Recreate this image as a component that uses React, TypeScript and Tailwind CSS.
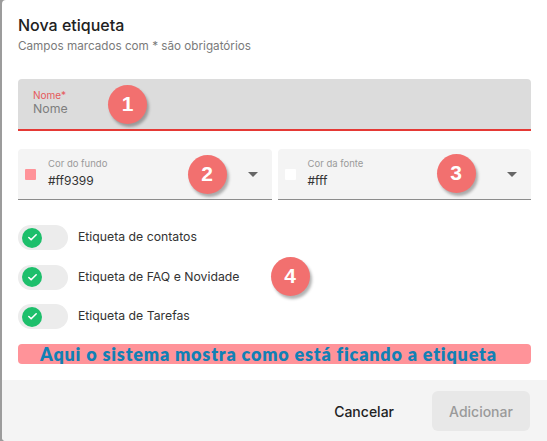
import { Check } from "lucide-react";

const font = { fontFamily: "Inter, 'Noto Sans', sans-serif" };

function Badge({ n, x, y }: { n: number; x: number; y: number }) {
  return (
    <div
      className="absolute w-[39px] h-[39px] rounded-full bg-[#f2706f] text-white flex items-center justify-center text-[21px] font-bold shadow-[2px_3px_3px_rgba(0,0,0,0.3)] font-['Liberation_Sans',Arial,sans-serif]"
      style={{ left: x - 19.5, top: y - 19.5 }}
    >
      {n}
    </div>
  );
}

function Caret() {
  return (
    <svg width="10" height="5" viewBox="0 0 10 5" className="shrink-0">
      <path d="M0 0h10L5 5z" fill="#666" />
    </svg>
  );
}

function ColorSelect({ label, value, swatch }: { label: string; value: string; swatch: string }) {
  return (
    <div className="flex-1 h-[51px] bg-[#f4f4f4] rounded-t-[4px] border-b border-[#8c8c8c] flex items-center pl-[7px] pr-[14px]">
      <div className="w-[11px] h-[11px] rounded-[1px]" style={{ background: swatch }} />
      <div className="flex flex-col ml-[12px] flex-1 -mt-[1px]">
        <span className="text-[9.5px] leading-[12px] text-[#9a9a9a]">{label}</span>
        <span className="text-[12px] leading-[16px] text-[#333] mt-[3px]">{value}</span>
      </div>
      <Caret />
    </div>
  );
}

function Toggle({ label }: { label: string }) {
  return (
    <div className="flex items-center h-[25px]">
      <div className="w-[50px] h-[25px] rounded-full bg-[#ececec] flex items-center pl-[4px]">
        <div className="w-[20px] h-[20px] rounded-full bg-[#1dbf6b] flex items-center justify-center">
          <Check size={11} strokeWidth={3.5} color="white" />
        </div>
      </div>
      <span className="ml-[10px] text-[12.25px] text-[#333]">{label}</span>
    </div>
  );
}

export default function App() {
  return (
    <div className="w-[547px] h-[441px] bg-[#9c9c9c] pl-[2px] overflow-hidden" style={font}>
      <div className="relative h-full bg-white rounded-l-[4px] flex flex-col overflow-hidden">
        <div className="px-4 pt-[14px] flex flex-col">
          <h2 className="text-[16px] leading-[22px] font-medium text-[#212121]">Nova etiqueta</h2>
          <p className="text-[11.7px] leading-4 text-[#7a7a7a] mt-[2px]">Campos marcados com * são obrigatórios</p>

          <div className="mt-[25px] h-[52px] bg-[#dcdcdc] rounded-t-[4px] border-b-2 border-[#e53935] flex flex-col pl-[15px] pt-[10px]">
            <span className="text-[10px] leading-[12px] text-[#e5595a]">Nome*</span>
            <span className="text-[12.3px] leading-[16px] text-[#7e7e7e]">Nome</span>
          </div>

          <div className="mt-[18px] flex gap-[6px]">
            <ColorSelect label="Cor do fundo" value="#ff9399" swatch="#ff9399" />
            <ColorSelect label="Cor da fonte" value="#fff" swatch="#ffffff" />
          </div>

          <div className="mt-[25px] flex flex-col gap-[14.5px]">
            <Toggle label="Etiqueta de contatos" />
            <Toggle label="Etiqueta de FAQ e Novidade" />
            <Toggle label="Etiqueta de Tarefas" />
          </div>

          <div className="mt-[15px] h-[20px] bg-[#ff9399] rounded-[4px] flex items-center pl-[22px]">
            <span className="text-[18px] leading-[20px] font-extrabold text-[#1180b5] font-['Lato',sans-serif] tracking-[0.8px]">
              Aqui o sistema mostra como está ficando a etiqueta
            </span>
          </div>
        </div>

        <div className="mt-[16px] flex-1 bg-[#f4f4f4] flex items-start justify-end pt-[11px] pr-[17px]">
          <button className="h-10 px-[20px] mr-[18px] text-[14px] font-medium text-[#222]">Cancelar</button>
          <button className="h-10 w-[98px] rounded-[6px] bg-[#e8e8e8] text-[14px] font-medium text-[#9a9a9a]">Adicionar</button>
        </div>

        <Badge n={1} x={125.5} y={104} />
        <Badge n={2} x={205} y={174} />
        <Badge n={3} x={454} y={173} />
        <Badge n={4} x={288} y={276} />
      </div>
    </div>
  );
}
